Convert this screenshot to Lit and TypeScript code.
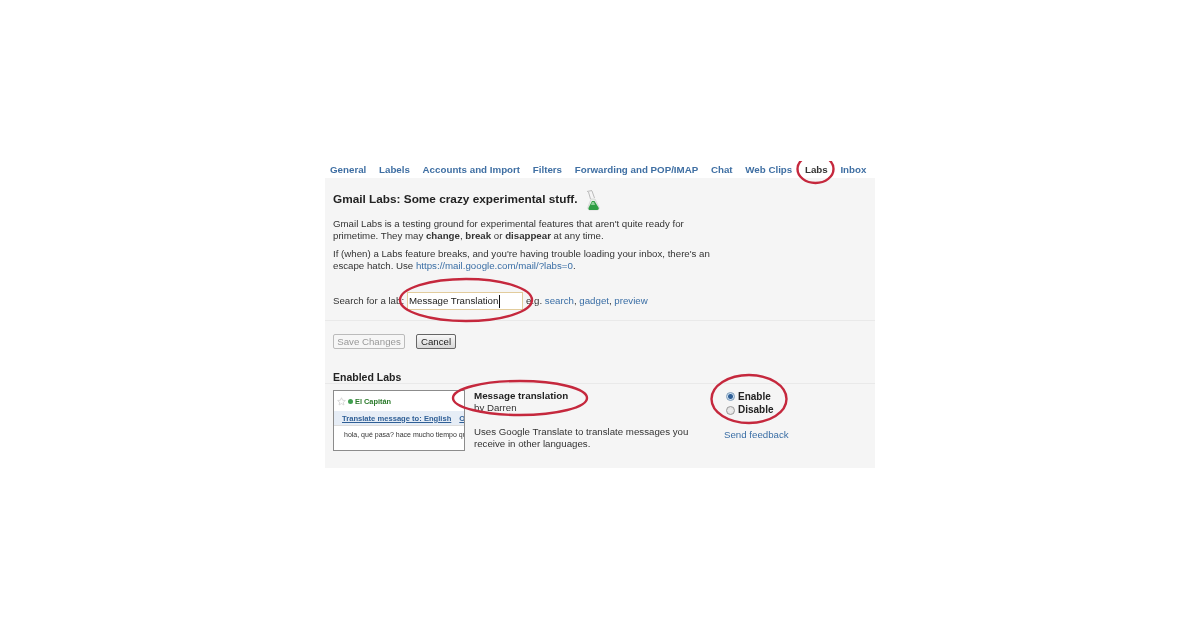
import { LitElement, html, css, svg } from "lit";
import { customElement } from "lit/decorators.js";

const TABS = ["General", "Labels", "Accounts and Import", "Filters", "Forwarding and POP/IMAP", "Chat", "Web Clips", "Labs", "Inbox"];

@customElement("app-root")
export class AppRoot extends LitElement {
  static styles = css`
    :host { display: block; position: relative; width: 1200px; height: 630px; background: #fff; overflow: hidden;
      font-family: "Liberation Sans", Arial, sans-serif; color: #333; font-size: 9.7px; line-height: 12px; }
    a { color: #3a6ea5; text-decoration: none; }
    .wrap { width: 550px; margin-left: 325px; padding-top: 161px; filter: blur(0.35px); }
    .tabs { display: flex; gap: 12.7px; height: 17px; align-items: center; padding-left: 5px; font-weight: 700; font-size: 9.75px; white-space: nowrap; }
    .tabs a { color: #3f6fa3; }
    .tabs a.on { color: #333; }
    .panel { background: #f5f5f5; height: 290px; display: flex; flex-direction: column; }
    .head { display: flex; align-items: flex-start; gap: 8px; padding: 8px 8px 0; height: 32px; box-sizing: border-box; }
    .head h1 { margin: 6px 0 0; font-size: 11.8px; line-height: 15px; font-weight: 700; color: #222; white-space: nowrap; }
    .head svg { flex: none; margin-top: 3px; }
    .intro { padding: 0 8px; width: 380px; box-sizing: content-box; }
    .intro p { margin: 0 0 6px; }
    .intro .p1 { margin-top: 8px; }
    .search { display: flex; align-items: center; padding: 0 8px; margin-top: 14px; height: 18px; white-space: nowrap; }
    .lab { width: 74px; }
    .field { width: 116px; height: 18px; box-sizing: border-box; border: 1px solid #e2cc9c; background: #fff; padding: 2px 1px; color: #222; display: flex; align-items: center; }
    .caret { width: 1px; height: 13px; background: #111; margin-left: 1px; }
    .eg { margin-left: 3px; }
    .rule { height: 1px; background: #e9e9e9; }
    .rule.r1 { margin-top: 10px; }
    .btns { display: flex; gap: 11px; padding: 13px 8px 0; }
    .btn { height: 15px; box-sizing: border-box; display: flex; align-items: center; justify-content: center; border: 1px solid #666; border-radius: 2px;
      background: linear-gradient(#f8f8f8, #d8d8d8); color: #222; width: 40px; }
    .btn.off { width: 72px; border-color: #bbb; background: #f6f6f6; color: #999; }
    .section { margin: 22px 8px 0; font-weight: 700; font-size: 10.5px; height: 12px; color: #222; }
    .lab-row { display: flex; padding: 6px 8px 0; }
    .thumb { width: 132px; height: 61px; box-sizing: border-box; border: 1px solid #8c8c8c; background: #fff; overflow: hidden; white-space: nowrap; font-size: 7px; line-height: 9px; }
    .t1 { height: 20px; display: flex; align-items: center; gap: 2px; padding-left: 3px; color: #2b7a2b; font-weight: 700; font-size: 7.4px; }
    .dot { width: 5px; height: 5px; border-radius: 50%; background: #3f9f4f; }
    .t2 { height: 14px; background: #e6edf6; display: flex; align-items: center; gap: 8px; padding-left: 8px; font-weight: 700; font-size: 7.6px; border-bottom: 1px solid #ddd; }
    .t2 a { text-decoration: underline; color: #2f5f96; }
    .t3 { padding: 4px 0 0 10px; color: #333; }
    .desc { width: 250px; margin-left: 9px; }
    .desc b { display: block; font-size: 9.8px; color: #222; }
    .desc .by { display: block; }
    .desc p { margin: 12px 0 0; width: 225px; }
    .opts { margin-left: 1px; display: flex; flex-direction: column; }
    .opt { display: flex; align-items: center; gap: 3px; height: 13.5px; font-weight: 700; padding-left: 1px; color: #222; font-size: 10px; }
    .radio { width: 9px; height: 9px; border-radius: 50%; border: 1px solid #999; box-sizing: border-box; background: radial-gradient(circle, #eee, #ddd); }
    .radio.on { background: radial-gradient(circle, #2f5f96 0 2px, #cfe0f2 3px); border-color: #7f9db9; }
    .fb { margin-top: 12px; margin-left: -1px; }
    .marks { position: absolute; inset: 0; pointer-events: none; }
  `;

  render() {
    return html`
      <div class="wrap">
        <nav class="tabs">
          ${TABS.map((t) => html`<a class=${t === "Labs" ? "on" : ""} href="#">${t}</a>`)}
        </nav>
        <div class="panel">
          <div class="head">
            <h1>Gmail Labs: Some crazy experimental stuff.</h1>
            <svg width="16" height="24" viewBox="0 0 16 24">
              <path d="M1 2.500l5-1M2.500 3l2 7M6 2l2.500 7" stroke="#bbb" fill="none" stroke-width="1"/>
              <path d="M5 10h4l4 8a2 2 0 0 1-1.800 3H3.800A2 2 0 0 1 2 18z" fill="#e9efe9" stroke="#ccc" stroke-width=".6"/>
              <path d="M6 12h2.500l4 6.500a1.600 1.600 0 0 1-1.400 2.500H4A1.600 1.600 0 0 1 2.700 18.500z" fill="#2f9e44"/>
              <path d="M6 13h2l1 3H5z" fill="#8fd09a"/>
            </svg>
          </div>
          <div class="intro">
            <p class="p1">Gmail Labs is a testing ground for experimental features that aren't quite ready for primetime. They may <b>change</b>, <b>break</b> or <b>disappear</b> at any time.</p>
            <p>If (when) a Labs feature breaks, and you're having trouble loading your inbox, there's an escape hatch. Use <a href="#">https://mail.google.com/mail/?labs=0</a>.</p>
          </div>
          <div class="search">
            <span class="lab">Search for a lab:</span>
            <div class="field">Message Translation<span class="caret"></span></div>
            <span class="eg">e.g. <a href="#">search</a>, <a href="#">gadget</a>, <a href="#">preview</a></span>
          </div>
          <div class="rule r1"></div>
          <div class="btns">
            <div class="btn off">Save Changes</div>
            <div class="btn">Cancel</div>
          </div>
          <div class="section">Enabled Labs</div>
          <div class="rule"></div>
          <div class="lab-row">
            <div class="thumb">
              <div class="t1">
                <svg width="9" height="9" viewBox="0 0 10 10"><path d="M5 .8l1.300 2.800 3 .3-2.300 2 .7 3L5 7.300 2.300 8.900l.7-3-2.300-2 3-.3z" fill="#fff" stroke="#ccc" stroke-width=".8"/></svg>
                <span class="dot"></span>El Capitán
              </div>
              <div class="t2"><a href="#">Translate message to: English</a><a href="#">Options</a></div>
              <div class="t3">hola, qué pasa? hace mucho tiempo que no nos vemos</div>
            </div>
            <div class="desc">
              <b>Message translation</b>
              <span class="by">by Darren</span>
              <p>Uses Google Translate to translate messages you receive in other languages.</p>
            </div>
            <div class="opts">
              <div class="opt"><span class="radio on"></span>Enable</div>
              <div class="opt"><span class="radio"></span>Disable</div>
              <a class="fb" href="#">Send feedback</a>
            </div>
          </div>
        </div>
      </div>
      <svg class="marks" width="1200" height="630" viewBox="0 0 1200 630" fill="none" stroke="#c5283d" stroke-width="2.400">
        <defs><clipPath id="c"><rect x="780" y="161" width="70" height="30"/></clipPath></defs>
        ${svg`<ellipse cx="815.500" cy="169" rx="18" ry="14" clip-path="url(#c)"/>
        <ellipse cx="466" cy="300" rx="66" ry="21"/>
        <ellipse cx="520" cy="398" rx="67" ry="17"/>
        <ellipse cx="749" cy="399" rx="37.500" ry="24"/>`}
      </svg>
    `;
  }
}
